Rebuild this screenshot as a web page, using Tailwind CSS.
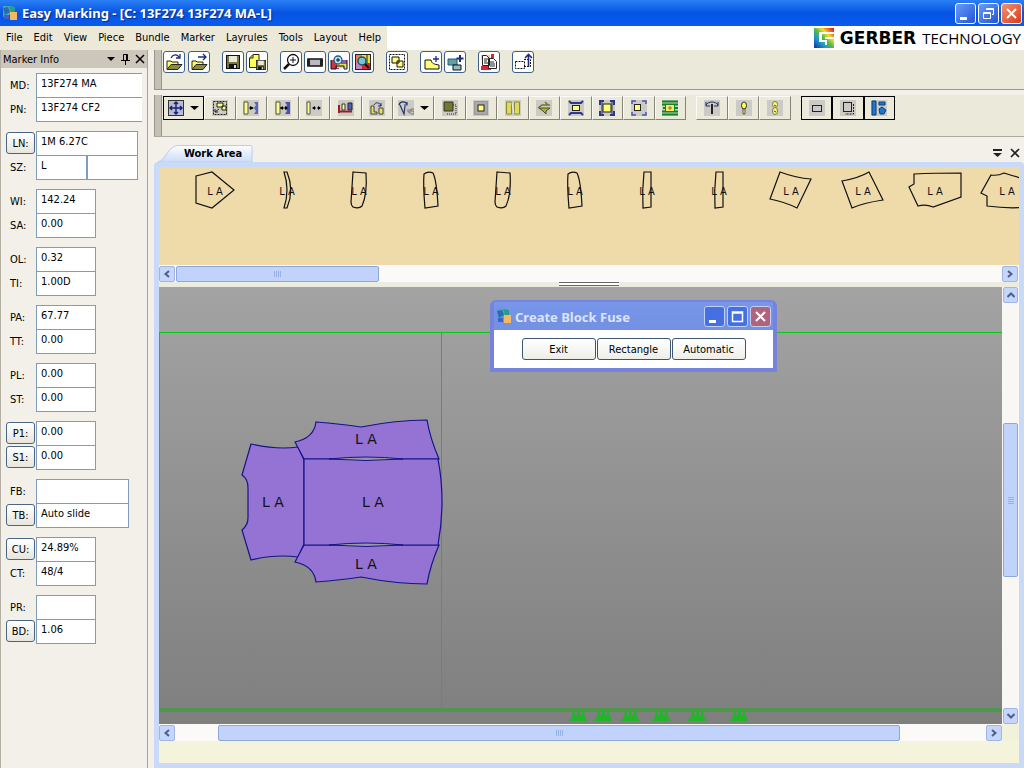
<!DOCTYPE html>
<html lang="en">
<head>
<meta charset="utf-8">
<meta name="viewport" content="width=device-width, initial-scale=1">
<title>Easy Marking</title>
<script src="https://cdn.jsdelivr.net/npm/@tailwindcss/browser@4"></script>
</head>
<body class="flex h-screen flex-col overflow-hidden bg-[#f2f0e8] font-['DejaVu_Sans_Condensed','DejaVu_Sans',sans-serif] text-[11px] leading-4 text-black">

<!-- shared symbols -->
<svg class="hidden" aria-hidden="true">
  <defs>
    <symbol id="app" viewBox="0 0 16 16"><path d="M1 1h9l3 4v5H6L1 12z" fill="#43a9c4"/><path d="M1 3l5-1 2 5-5 3z" fill="#2a6da8"/><path d="M7 1l6 1v6l-4-1z" fill="#2b9a86"/><rect x="8" y="7" width="7" height="8" fill="#f3b861"/><path d="M2 10h5v4H2z" fill="#3f62c4"/></symbol>
    <symbol id="left" viewBox="0 0 8 8"><path d="M6 1 2.500 4 6 7" fill="none" stroke="#4d6185" stroke-width="2"/></symbol>
    <symbol id="right" viewBox="0 0 8 8"><path d="M2 1 5.500 4 2 7" fill="none" stroke="#4d6185" stroke-width="2"/></symbol>
    <symbol id="up" viewBox="0 0 8 8"><path d="M0.500 6 4 2.500 7.500 6" fill="none" stroke="#4d6185" stroke-width="2"/></symbol>
    <symbol id="down" viewBox="0 0 8 8"><path d="M0.500 2 4 5.500 7.500 2" fill="none" stroke="#4d6185" stroke-width="2"/></symbol>
    <symbol id="folder" viewBox="0 0 18 18"><path d="M2 15V7h4l1 1h6v3" fill="#ffff5a" stroke="#222" /><path d="M2 15.500l4-5h11l-4 5z" fill="#8b8b3a" stroke="#222"/></symbol>
    <symbol id="disk" viewBox="0 0 14 14"><rect x=".5" y=".5" width="13" height="13" fill="#77773a" stroke="#111"/><rect x="3" y="1" width="8" height="6" fill="#e8e8e0"/><rect x="3" y="9" width="8" height="5" fill="#111"/><rect x="8" y="10" width="2" height="3" fill="#ddd"/></symbol>
  </defs>
</svg>

<header class="flex h-[26px] shrink-0 items-center bg-linear-to-b from-[#2a7ff5] via-[#0654e2] to-[#0a5bf0] pl-[2px] pr-[2px]">
  <svg class="h-4 w-4"><use href="#app"/></svg>
  <h1 class="ml-1 flex-1 whitespace-nowrap font-['Noto_Sans',sans-serif] text-[13px] font-bold text-white [text-shadow:1px_1px_1px_#0a2a80]">Easy Marking - [C: 13F274 13F274 MA-L]</h1>
  <div class="flex gap-[2px]">
    <button aria-label="Minimize" class="h-[21px] w-[21px] rounded-[3px] border border-white bg-linear-to-br from-[#6b9bf5] to-[#2353d8]"><svg class="h-[19px] w-[19px]"><path d="M4 13h7v3H4z" fill="#fff"/></svg></button>
    <button aria-label="Restore" class="h-[21px] w-[21px] rounded-[3px] border border-white bg-linear-to-br from-[#6b9bf5] to-[#2353d8]"><svg class="h-[19px] w-[19px]" fill="none" stroke="#fff"><path d="M4.500 8.500h7v6h-7zM4.500 9.500h7M7.500 6V4.500h7v6H13M7.500 5.500h7"/></svg></button>
    <button aria-label="Close" class="h-[21px] w-[21px] rounded-[3px] border border-white bg-linear-to-br from-[#f09070] to-[#d43a14]"><svg class="h-[19px] w-[19px]"><path d="M5 5l9 9M14 5l-9 9" stroke="#fff" stroke-width="2"/></svg></button>
  </div>
</header>

<div class="flex h-6 shrink-0 bg-white">
  <nav class="flex items-center gap-[11px] bg-[#ece9d8] pl-[6px] pr-[6px]">
    <a href="#">File</a><a href="#">Edit</a><a href="#">View</a><a href="#">Piece</a><a href="#">Bundle</a><a href="#">Marker</a><a href="#">Layrules</a><a href="#">Tools</a><a href="#">Layout</a><a href="#">Help</a>
  </nav>
  <div class="ml-auto flex items-center whitespace-nowrap font-['Open_Sans',sans-serif]">
    <svg class="mr-[6px] h-5 w-5" viewBox="0 0 20 20">
      <defs><linearGradient id="rb" x1="0" y1="1" x2="1" y2="0"><stop offset="0" stop-color="#1b2a9c"/><stop offset=".3" stop-color="#1f9ac8"/><stop offset=".5" stop-color="#58b947"/><stop offset=".68" stop-color="#f5df2a"/><stop offset=".85" stop-color="#ee5a24"/><stop offset="1" stop-color="#c31722"/></linearGradient></defs>
      <path d="M0 0h20v20H0z" fill="url(#rb)"/><path d="M5 4h15v2H8v6h5v5h-2v-3H5z" fill="#fff"/><path d="M11 9h9v2h-9z" fill="#fff"/>
    </svg>
    <span class="font-['DejaVu_Sans',sans-serif] text-[17px] font-bold">GERBER</span>
    <span class="ml-[6px] mr-[3px] text-[15px]">TECHNOLOGY</span>
  </div>
</div>

<div class="flex min-h-0 flex-1">
  <!-- marker info -->
  <aside class="flex w-[148px] shrink-0 flex-col border-l border-r border-l-[#b4b0a4] border-r-[#a8a498] bg-[#f2f0e9]">
    <div class="flex h-[18px] shrink-0 items-center bg-[#cdc7bb] pl-[2px] pr-[2px]">
      <h2 class="flex-1 pt-[2px]">Marker Info</h2>
      <button aria-label="Panel menu" class="mr-[6px]"><svg class="h-2 w-2"><path d="M0 2h8L4 6z"/></svg></button>
      <button aria-label="Pin" class="mr-[5px]"><svg class="h-[11px] w-[9px]" fill="none" stroke="#000"><path d="M2.500 6V.5h4V6M5.500 1v5M0 6.500h9M4.500 7v4"/></svg></button>
      <button aria-label="Close panel"><svg class="h-[10px] w-[10px]"><path d="M1 1l8 8M9 1l-8 8" stroke="#000" stroke-width="1.500"/></svg></button>
    </div>
    <form class="mt-[5px] flex flex-col gap-[10px]">
      <div class="flex flex-col">
        <div class="flex h-6 items-center"><label for="md" class="w-[35px] pl-[9px] pt-[2px]">MD:</label><input id="md" value="13F274 MA" class="h-[25px] w-[106px] border border-r-0 border-[#7f9db9] bg-white px-1 pb-[3px]"></div>
        <div class="flex h-6 items-center"><label for="pn" class="w-[35px] pl-[9px] pt-[2px]">PN:</label><input id="pn" value="13F274 CF2" class="h-[25px] w-[106px] border border-r-0 border-[#7f9db9] bg-white px-1 pb-[3px]"></div>
      </div>
      <div class="flex flex-col">
        <div class="flex h-6 items-center"><button type="button" class="ml-[5px] mr-[1px] h-[22px] w-[29px] rounded-[3px] border border-[#4a6684] bg-linear-to-b from-white to-[#e6e6de] pt-[1px]">LN:</button><input aria-label="LN" value="1M 6.27C" class="h-[25px] w-[102px] border border-[#7f9db9] bg-white px-1 pb-[3px]"></div>
        <div class="flex h-6 items-center"><label for="sz" class="w-[35px] pl-[9px] pt-[2px]">SZ:</label><input id="sz" value="L" class="h-[25px] w-[51px] border border-[#7f9db9] bg-white px-1 pb-[3px]"><input aria-label="SZ second" value="" class="h-[25px] w-[51px] border border-[#7f9db9] bg-white px-1"></div>
      </div>
      <div class="flex flex-col">
        <div class="flex h-6 items-center"><label for="wi" class="w-[35px] pl-[9px] pt-[2px]">WI:</label><input id="wi" value="142.24" class="h-[25px] w-[60px] border border-[#7f9db9] bg-white px-1 pb-[3px]"></div>
        <div class="flex h-6 items-center"><label for="sa" class="w-[35px] pl-[9px] pt-[2px]">SA:</label><input id="sa" value="0.00" class="h-[25px] w-[60px] border border-[#7f9db9] bg-white px-1 pb-[3px]"></div>
      </div>
      <div class="flex flex-col">
        <div class="flex h-6 items-center"><label for="ol" class="w-[35px] pl-[9px] pt-[2px]">OL:</label><input id="ol" value="0.32" class="h-[25px] w-[60px] border border-[#7f9db9] bg-white px-1 pb-[3px]"></div>
        <div class="flex h-6 items-center"><label for="ti" class="w-[35px] pl-[9px] pt-[2px]">TI:</label><input id="ti" value="1.00D" class="h-[25px] w-[60px] border border-[#7f9db9] bg-white px-1 pb-[3px]"></div>
      </div>
      <div class="flex flex-col">
        <div class="flex h-6 items-center"><label for="pa" class="w-[35px] pl-[9px] pt-[2px]">PA:</label><input id="pa" value="67.77" class="h-[25px] w-[60px] border border-[#7f9db9] bg-white px-1 pb-[3px]"></div>
        <div class="flex h-6 items-center"><label for="tt" class="w-[35px] pl-[9px] pt-[2px]">TT:</label><input id="tt" value="0.00" class="h-[25px] w-[60px] border border-[#7f9db9] bg-white px-1 pb-[3px]"></div>
      </div>
      <div class="flex flex-col">
        <div class="flex h-6 items-center"><label for="pl" class="w-[35px] pl-[9px] pt-[2px]">PL:</label><input id="pl" value="0.00" class="h-[25px] w-[60px] border border-[#7f9db9] bg-white px-1 pb-[3px]"></div>
        <div class="flex h-6 items-center"><label for="st" class="w-[35px] pl-[9px] pt-[2px]">ST:</label><input id="st" value="0.00" class="h-[25px] w-[60px] border border-[#7f9db9] bg-white px-1 pb-[3px]"></div>
      </div>
      <div class="flex flex-col">
        <div class="flex h-6 items-center"><button type="button" class="ml-[5px] mr-[1px] h-[22px] w-[29px] rounded-[3px] border border-[#4a6684] bg-linear-to-b from-white to-[#e6e6de] pt-[1px]">P1:</button><input aria-label="P1" value="0.00" class="h-[25px] w-[60px] border border-[#7f9db9] bg-white px-1 pb-[3px]"></div>
        <div class="flex h-6 items-center"><button type="button" class="ml-[5px] mr-[1px] h-[22px] w-[29px] rounded-[3px] border border-[#4a6684] bg-linear-to-b from-white to-[#e6e6de] pt-[1px]">S1:</button><input aria-label="S1" value="0.00" class="h-[25px] w-[60px] border border-[#7f9db9] bg-white px-1 pb-[3px]"></div>
      </div>
      <div class="flex flex-col">
        <div class="flex h-6 items-center"><label for="fb" class="w-[35px] pl-[9px] pt-[2px]">FB:</label><input id="fb" value="" class="h-[25px] w-[93px] border border-[#7f9db9] bg-white px-1"></div>
        <div class="flex h-6 items-center"><button type="button" class="ml-[5px] mr-[1px] h-[22px] w-[29px] rounded-[3px] border border-[#4a6684] bg-linear-to-b from-white to-[#e6e6de] pt-[1px]">TB:</button><input aria-label="TB" value="Auto slide" class="h-[25px] w-[93px] border border-[#7f9db9] bg-white px-1 pb-[3px]"></div>
      </div>
      <div class="flex flex-col">
        <div class="flex h-6 items-center"><button type="button" class="ml-[5px] mr-[1px] h-[22px] w-[29px] rounded-[3px] border border-[#4a6684] bg-linear-to-b from-white to-[#e6e6de] pt-[1px]">CU:</button><input aria-label="CU" value="24.89%" class="h-[25px] w-[60px] border border-[#7f9db9] bg-white px-1 pb-[3px]"></div>
        <div class="flex h-6 items-center"><label for="ct" class="w-[35px] pl-[9px] pt-[2px]">CT:</label><input id="ct" value="48/4" class="h-[25px] w-[60px] border border-[#7f9db9] bg-white px-1 pb-[3px]"></div>
      </div>
      <div class="flex flex-col">
        <div class="flex h-6 items-center"><label for="pr" class="w-[35px] pl-[9px] pt-[2px]">PR:</label><input id="pr" value="" class="h-[25px] w-[60px] border border-[#7f9db9] bg-white px-1"></div>
        <div class="flex h-6 items-center"><button type="button" class="ml-[5px] mr-[1px] h-[22px] w-[29px] rounded-[3px] border border-[#4a6684] bg-linear-to-b from-white to-[#e6e6de] pt-[1px]">BD:</button><input aria-label="BD" value="1.06" class="h-[25px] w-[60px] border border-[#7f9db9] bg-white px-1 pb-[3px]"></div>
      </div>
    </form>
  </aside>

  <div class="ml-[6px] flex min-w-0 flex-1 flex-col">
    <!-- file and zoom toolbar -->
    <div class="flex h-10 shrink-0 border-b border-[#98958a] bg-[#ebe9d9]">
      <div class="mr-[1px] w-2 border-l border-r border-[#99958a] bg-[#c4c0b6]"></div>
      <div class="flex gap-3 pt-[1px] [&_button]:h-[22px] [&_button]:w-[22px] [&_button]:rounded-[3px] [&_button]:border [&_button]:border-[#3e6088] [&_button]:bg-white [&_svg.i]:h-5 [&_svg.i]:w-5">
        <div class="flex gap-[3px]">
          <button aria-label="Open"><svg class="i" viewBox="0 0 20 20"><use href="#folder" x="1" y="2" width="18" height="18"/><path d="M7 6c2-4 6-4 8-1M16 2v4h-4" fill="none" stroke="#1b2a78" stroke-width="1.300"/></svg></button>
          <button aria-label="Open next"><svg class="i" viewBox="0 0 20 20"><use href="#folder" x="1" y="2" width="18" height="18"/><path d="M9 5h8M14 2l3 3-3 3" fill="none" stroke="#1b2a78" stroke-width="1.300"/></svg></button>
        </div>
        <div class="flex gap-[2px]">
          <button aria-label="Save"><svg class="i" viewBox="0 0 20 20"><use href="#disk" x="3" y="3" width="14" height="14"/></svg></button>
          <button aria-label="Save as"><svg class="i" viewBox="0 0 20 20"><path d="M6 2.500h6v13H2.500V6z" fill="#ffff5a" stroke="#222"/><path d="M6 3v3H3" fill="none" stroke="#222"/><use href="#disk" x="9" y="8" width="10" height="10"/></svg></button>
        </div>
        <div class="flex gap-[2px]">
          <button aria-label="Zoom in"><svg class="i" viewBox="0 0 20 20" fill="none" stroke="#111"><circle cx="12" cy="8" r="5.500" stroke-width="1.300"/><path d="M9 8h6M12 5v6"/><path d="M8 12l-5 5" stroke-width="2.500"/></svg></button>
          <button aria-label="Full length"><svg class="i" viewBox="0 0 20 20"><rect x="3" y="7" width="14" height="7" fill="#b9b9c2" stroke="#111" stroke-width="1.500"/><path d="M2 7h3v7H2zM15 7h3v7h-3z" fill="#222"/></svg></button>
          <button aria-label="Zoom marker"><svg class="i" viewBox="0 0 20 20"><path d="M2 8h5l3 5v4H2z" fill="#d23344"/><path d="M12 8h6v5h-6z" fill="#9b55a5"/><path d="M8 12h10v4H8z" fill="#e8df55"/><path d="M2 8v9h5v-3h8v3h3V8" fill="none" stroke="#111"/><circle cx="9" cy="8" r="4" fill="#b8e6f2" stroke="#19608c" stroke-width="1.300"/><path d="M9 6v4M7 8h4" stroke="#111"/></svg></button>
          <button aria-label="Zoom window"><svg class="i" viewBox="0 0 20 20"><path d="M2 2h7v7H2z" fill="#ef7d58"/><path d="M9 2h9v9H9z" fill="#f5dd36"/><path d="M2 9h7v9H2z" fill="#c783bd"/><path d="M9 11h9v7H9z" fill="#dd2331"/><path d="M2 2.500h16M2.500 2v16M17.500 2v16M2 17.500h16M14 2v9" stroke="#222" fill="none"/><circle cx="9" cy="9" r="4" fill="#74c7d2" stroke="#185469" stroke-width="1.500"/><path d="M12 12l4 4" stroke="#111" stroke-width="2"/></svg></button>
        </div>
        <button aria-label="Select pieces"><svg class="i" viewBox="0 0 20 20"><rect x="2.500" y="2.500" width="15" height="15" fill="none" stroke="#111" stroke-dasharray="2 1"/><path d="M5 5h7v6H5zM10 9h6v6h-6z" fill="#ffff77" stroke="#111"/></svg></button>
        <div class="flex gap-[2px]">
          <button aria-label="Add piece"><svg class="i" viewBox="0 0 20 20"><path d="M4 8h6c1 4 3 4 8 5v4H4z" fill="#ffff77" stroke="#111"/><path d="M15 4v6M12 7h6" stroke="#1b2a88" stroke-width="1.300"/></svg></button>
          <button aria-label="Add bundle"><svg class="i" viewBox="0 0 20 20"><path d="M3 7h9v6H3z" fill="#5fa0a5" stroke="#245a68"/><path d="M8 13h8v5H8z" fill="#8fc0c0" stroke="#111"/><path d="M15 3v7M11.500 6.500h7" stroke="#1b2a88" stroke-width="2"/></svg></button>
        </div>
        <button aria-label="Copy report"><svg class="i" viewBox="0 0 20 20"><path d="M2 3h9v5H2z" fill="#f2e25a"/><path d="M2 14h10v4H2z" fill="#dd2331"/><path d="M3.500 3.500h4l3 3v7h-7zM9.500 6.500h5l3 3v7h-8z" fill="#fff" stroke="#222"/><path d="M5 7h4M5 9h3M5 11h4M11 10h4M11 12h5M11 14h5" stroke="#222"/><path d="M12 2h3v4h-3z" fill="#dd2331"/></svg></button>
        <button aria-label="Return piece"><svg class="i" viewBox="0 0 20 20" fill="none" stroke="#111"><rect x="2.500" y="9.500" width="9" height="7" stroke-dasharray="2 1"/><path d="M11 7.500h6.500v7H11" stroke-dasharray="2 1"/><path d="M15.500 15V3M12 6l3.500-3.500L19 6" stroke="#1b2a88" stroke-width="1.600"/></svg></button>
      </div>
    </div>

    <!-- piece toolbar -->
    <div class="mt-[5px] flex h-[42px] shrink-0 border-b border-[#aaa79b] bg-[#ebe9d9] text-[0px]">
      <div class="mr-[1px] w-2 border-l border-r border-[#99958a] bg-[#c4c0b6]"></div>
      <div class="flex h-6 gap-[10px] pt-[1px] [&_button]:flex [&_button]:h-6 [&_button]:items-center [&_button]:justify-center [&_svg.i]:h-4 [&_svg.i]:w-4 [&_svg.i]:bg-[#cbcac4]">
        <div class="flex w-[523px] [&_button]:flex-1 [&_button.n]:border [&_button.n]:border-l-[#fbfaf5] [&_button.n]:border-t-[#fbfaf5] [&_button.n]:border-r-[#85827a] [&_button.n]:border-b-[#85827a]">
          <button aria-label="Move" class="max-w-[41px] min-w-[41px] gap-[6px] border border-black"><svg class="i" viewBox="0 0 16 16"><rect x=".5" y=".5" width="15" height="15" fill="#b9bbd8" stroke="#333"/><path d="M8 2v12M2 8h12M6 4l2-2 2 2M6 12l2 2 2-2M4 6L2 8l2 2M12 6l2 2-2 2" fill="none" stroke="#15206e" stroke-width="1.400"/></svg><svg class="h-2 w-[9px]"><path d="M0 2h9L4.500 6z"/></svg></button>
          <button aria-label="Group" class="n"><svg class="i" viewBox="0 0 16 16"><rect x="1.500" y="1.500" width="13" height="13" fill="none" stroke="#222" stroke-dasharray="2 1"/><path d="M5 3h6v4H5zM10 6h4v4h-4z" fill="#ffff77" stroke="#222"/><path d="M3 12l4-3M3 12h3M3 12V9" fill="none" stroke="#222"/></svg></button>
          <button aria-label="Butt left" class="n"><svg class="i" viewBox="0 0 16 16"><path d="M1 2h4v12H1z" fill="#ffff88" stroke="#555"/><path d="M11 2h4v12h-4l2-3-2-3 2-3z" fill="#5a67b8"/><path d="M6 8h4" stroke="#111"/><path d="M7 6v4l4-2z"/></svg></button>
          <button aria-label="Butt right" class="n"><svg class="i" viewBox="0 0 16 16"><path d="M1 2h4v12H1z" fill="#ffff88" stroke="#555"/><path d="M10 2h5v12h-5l2-3-2-3 2-3z" fill="#4853ae"/><path d="M5 8h7" stroke="#111"/><path d="M8 6v4L5 8zM10 6v4l3-2z"/></svg></button>
          <button aria-label="Gap" class="n"><svg class="i" viewBox="0 0 16 16"><path d="M1 2h3v12H1z" fill="#ffff88" stroke="#555"/><path d="M7 8h8" stroke="#111" stroke-dasharray="3 1"/><path d="M9 6v4L6 8zM12 6v4l3-2z"/></svg></button>
          <button aria-label="Align" class="n"><svg class="i" viewBox="0 0 16 16"><path d="M4 4h3v6H4z" fill="#ffff88" stroke="#333"/><path d="M10 3h4v7h-4z" fill="#5361b6" stroke="#222"/><path d="M1 5v8M1 11.500h13" fill="none" stroke="#9a1c28" stroke-width="2"/></svg></button>
          <button aria-label="Rotate" class="n"><svg class="i" viewBox="0 0 16 16"><path d="M2 6h3v6h3v2H2zM10 8h4v6h-4z" fill="#e8e45c" stroke="#444"/><path d="M5 5c1-3 6-3 7 1M12 3v3H9" fill="none" stroke="#222a66"/></svg></button>
          <button aria-label="Tilt" class="n max-w-[41px] min-w-[41px] gap-[6px]"><svg class="i" viewBox="0 0 16 16"><path d="M1 5c1-4 6-4 8-1M9 2v3H6M2 5l4 9 1-8" fill="none" stroke="#28336e" stroke-width="1.200"/><path d="M10 9v3h2M12 9v5M13 9h3M13 9v2h3v3h-3" fill="none" stroke="#777"/></svg><svg class="h-2 w-[9px]"><path d="M0 2h9L4.500 6z"/></svg></button>
          <button aria-label="Block" class="n"><svg class="i" viewBox="0 0 16 16"><path d="M5 5h9v9H5" fill="none" stroke="#222" stroke-dasharray="1 1"/><path d="M2 2h9v9H2z" fill="#71792b" stroke="#333"/></svg></button>
          <button aria-label="Buffer" class="n"><svg class="i" viewBox="0 0 16 16"><rect x="1.500" y="1.500" width="13" height="13" fill="#aaa" stroke="#777" stroke-dasharray="1 1"/><rect x="5" y="5" width="6" height="6" fill="#ffff88" stroke="#222"/></svg></button>
          <button aria-label="Split" class="n"><svg class="i" viewBox="0 0 16 16"><path d="M1.500 2h5v12h-5zM9.500 2h5v12h-5z" fill="#dedb5a" stroke="#8b893c"/><path d="M7 3l2 10" stroke="#eee"/></svg></button>
          <button aria-label="Flip" class="n"><svg class="i" viewBox="0 0 16 16"><path d="M3 8h11l-4 3v3l-3-3z" fill="#a9b630" stroke="#4a501c"/><path d="M2 8l4-3h8M9 2l3 3" fill="none" stroke="#6f7926" stroke-width="1.500"/></svg></button>
          <button aria-label="Center vertically" class="n"><svg class="i" viewBox="0 0 16 16"><path d="M1 1l2 2h10l2-2M1 15l2-2h10l2 2" fill="none" stroke="#2c3791" stroke-width="2"/><rect x="4.500" y="5.500" width="7" height="5" fill="#ffff88" stroke="#222"/></svg></button>
          <button aria-label="Fit" class="n"><svg class="i" viewBox="0 0 16 16"><path d="M1 5V1h4M11 1h4v4M1 11v4h4M15 11v4h-4" fill="none" stroke="#2c3791" stroke-width="2"/><rect x="4" y="4" width="8" height="8" fill="#ffff77" stroke="#222"/><path d="M3 2v12M13 2v12" stroke="#333"/></svg></button>
          <button aria-label="Expand" class="n"><svg class="i" viewBox="0 0 16 16"><path d="M1 4V1h4M11 1h4v3M1 12v3h4M15 12v3h-4" fill="none" stroke="#4a56b0" stroke-width="1.500"/><rect x="3.500" y="4.500" width="6" height="6" fill="#ffff77" stroke="#222"/></svg></button>
          <button aria-label="Stripe match" class="n"><svg class="i" viewBox="0 0 16 16"><path d="M0 1.500h16M0 4.500h16M0 11.500h16M0 14.500h16M1 8h15" stroke="#128428" stroke-width="1.800"/><rect x="3.500" y="4.500" width="9" height="7" fill="#f1ee66" stroke="#128428"/><path d="M8 6v4M6 8h4" stroke="#c3551c"/></svg></button>
        </div>
        <div class="flex w-[95px] [&_button]:flex-1 [&_button]:border [&_button]:border-l-[#fbfaf5] [&_button]:border-t-[#fbfaf5] [&_button]:border-r-[#85827a] [&_button]:border-b-[#85827a]">
          <button aria-label="Swing"><svg class="i" viewBox="0 0 16 16" fill="none"><path d="M8 14V4" stroke="#222" stroke-width="2"/><path d="M2 5c2-4 10-4 12 0M2 2v4h4M14 2v4h-4" stroke="#222a66"/></svg></button>
          <button aria-label="Notch one"><svg class="i" viewBox="0 0 16 16"><ellipse cx="8" cy="5.500" rx="2.500" ry="3.500" fill="#ffff55" stroke="#333"/><path d="M7 9h2v5H7z" fill="#ffff55" stroke="#555"/></svg></button>
          <button aria-label="Notch two"><svg class="i" viewBox="0 0 16 16"><ellipse cx="8" cy="4.500" rx="2.500" ry="3" fill="#ffff55" stroke="#777"/><ellipse cx="8" cy="11" rx="2.500" ry="3.500" fill="#ffff55" stroke="#777"/><path d="M7 5l2 1M7 11l2 1" stroke="#444"/></svg></button>
        </div>
        <div class="flex w-[94px] [&_button]:flex-1 [&_button]:border [&_button]:border-black">
          <button aria-label="Show outline"><svg class="i" viewBox="0 0 16 16"><rect x="3.500" y="5.500" width="9" height="6" fill="none" stroke="#222"/></svg></button>
          <button aria-label="Show shadow"><svg class="i" viewBox="0 0 16 16" fill="none" stroke="#222"><rect x="3.500" y="2.500" width="8" height="9"/><path d="M13.500 4v10H5" stroke-dasharray="2 1"/></svg></button>
          <button aria-label="Show pieces"><svg class="i" viewBox="0 0 16 16"><path d="M1 1h4v14H1zM8 2h6v3H8zM8 9l3-2 4 3-2 4H9z" fill="#1d78cc" stroke="#0d3e7c"/></svg></button>
        </div>
      </div>
    </div>

    <!-- work area -->
    <div class="flex h-[25px] shrink-0 items-end pl-1">
      <div class="relative flex h-[17px] w-[95px] items-center">
        <svg class="absolute inset-0 h-full w-full" viewBox="0 0 95 17"><defs><linearGradient id="tb" x1="0" y1="0" x2="0" y2="1"><stop offset="0" stop-color="#fdfdff"/><stop offset="1" stop-color="#cbdcf8"/></linearGradient></defs><path d="M0 17C8 15 10 1 20 .5H92q2 0 2 2V17z" fill="url(#tb)" stroke="#b9cdee"/></svg>
        <span class="relative ml-[26px] whitespace-nowrap pt-[1px] font-bold">Work Area</span>
      </div>
      <div class="ml-auto mr-1 flex items-center gap-2 pb-1">
        <button aria-label="Tab list"><svg class="h-[10px] w-[9px]"><path d="M0 1h9v2H0zM0 5h9L4.500 9z" fill="#222"/></svg></button>
        <button aria-label="Close tab"><svg class="h-[10px] w-[10px]"><path d="M1 1l8 8M9 1l-8 8" stroke="#222" stroke-width="1.700"/></svg></button>
      </div>
    </div>
    <main class="flex min-h-0 flex-1 flex-col rounded-t-[4px] border-[5px] border-[#c8daf7] bg-[#f1f2dc]">
      <svg class="h-[98px] w-full shrink-0 bg-[#efdaa9]" fill="none" stroke="#111" stroke-width="1.200">
        <path d="M37 9l16-4 22 18-22 18-16-5z"/>
        <path d="M125 5h3c5 12 5 24 0 36h-3c4-12 4-24 0-36z"/>
        <path d="M194 5l13 1c1 14 0 24-4 33q-3 3-9 1q-2-2-2-5z"/>
        <path d="M265 7q4-3 9-1c3 6 4 14 5 33l-13 2c-1-12-2-22-1-34z"/>
        <path d="M338 5l13 1c1 14 0 24-4 33q-3 3-9 1q-2-2-2-5z"/>
        <path d="M409 7q4-3 9-1c3 6 4 14 5 33l-13 2c-1-12-2-22-1-34z"/>
        <path d="M485 5h7v35l-8 1q-1-18 1-36z"/>
        <path d="M557 5h7v35l-8 1q-1-18 1-36z"/>
        <path d="M621 5q16 6 31 7l-14 29q-12-6-27-9z"/>
        <path d="M683 14q17-3 27-9l14 28q-20 3-31 8z"/>
        <path d="M755 7q20-1 47-1v24l-28 10q-7-3-15-1l-9-19 5-3z"/>
        <path d="M832 8q7 1 13-2 12 4 25 7v27q-20 2-42-1V29l-6-3z"/>
        <g fill="#111" stroke="none" font-size="11" text-anchor="middle">
          <text x="56" y="28">L A</text><text x="128" y="28">L A</text><text x="200" y="28">L A</text><text x="272" y="28">L A</text><text x="344" y="28">L A</text><text x="416" y="28">L A</text><text x="488" y="28">L A</text><text x="560" y="28">L A</text><text x="632" y="28">L A</text><text x="704" y="28">L A</text><text x="776" y="28">L A</text><text x="848" y="28">L A</text>
        </g>
      </svg>
      <div class="flex h-[17px] shrink-0 bg-[#fbfaf8] pr-[1px] pt-[1px]">
        <button aria-label="Scroll left" class="flex h-4 w-4 items-center justify-center rounded-[2px] border border-[#9eb6e6] bg-[#c5d5fb]"><svg class="h-2 w-2"><use href="#left"/></svg></button>
        <div class="ml-[1px] flex h-4 w-[203px] items-center justify-center gap-[1px] rounded-[2px] border border-[#8ea8de] bg-[#c2d3fb]"><i class="h-[6px] w-[1px] bg-[#98b1e4]"></i><i class="h-[6px] w-[1px] bg-[#98b1e4]"></i><i class="h-[6px] w-[1px] bg-[#98b1e4]"></i><i class="h-[6px] w-[1px] bg-[#98b1e4]"></i></div>
        <button aria-label="Scroll right" class="ml-auto flex h-4 w-4 items-center justify-center rounded-[2px] border border-[#9eb6e6] bg-[#c5d5fb]"><svg class="h-2 w-2"><use href="#right"/></svg></button>
      </div>
      <div class="flex h-[5px] shrink-0 justify-center bg-[#ecebdf]"><div class="h-1 w-[60px] border-y border-[#666] bg-white"></div></div>
      <div class="flex min-h-0 flex-1">
        <div class="relative min-w-0 flex-1 overflow-hidden bg-linear-to-b from-[#a3a3a3] to-[#7f7f7f]">
          <svg class="h-full w-full">
            <g fill="#0ac81a"><rect y="45" width="100%" height="1"/><rect y="45" width="1" height="378"/><rect x="282" y="45" width="1" height="378"/><rect y="421" width="100%" height="4" fill="#4d984b"/><rect y="422" width="100%" height="1" fill="#34a836"/></g>
            <g fill="#9473d4" stroke="#14148a" stroke-width="1.200">
              <path d="M92 157q26 6 47 3l6 13v84l-6 13q-22-3-47 3l-9-30q6-5 6-12v-30q0-9-6-13z"/>
              <path d="M157 135q25 2 45 5 35-7 66-7 3 18 12 39H145l-9-17q19-4 21-20z"/>
              <path d="M157 295q25-2 45-5 35 7 66 7 3-18 12-39H145l-9 17q19 4 21 20z"/>
              <path d="M145 172h134q8 42 0 86H145z"/>
            </g>
            <path d="M170 172q37-4 74 0-37 3-74 0zM170 258q37-4 74 0-37 3-74 0z" fill="#9a96a8" stroke="#14148a"/>
            <g class="font-['DejaVu_Sans',sans-serif]" fill="#111" font-size="14" text-anchor="middle"><text x="207" y="157">L A</text><text x="114" y="220">L A</text><text x="214" y="220">L A</text><text x="207" y="282">L A</text></g>
            <!-- small bundle markers beneath the fabric edge -->
            <g fill="#22b52a">
              <path id="m" d="M410 434v-2h2l2-7h2v3h2v-5h3v5h2v-3h2l2 7h1v2z"/>
              <use href="#m" x="25"/><use href="#m" x="52"/><use href="#m" x="83"/><use href="#m" x="119"/><use href="#m" x="161"/>
            </g>
          </svg>
          <section class="absolute left-[331px] top-[13px] flex w-[287px] flex-col rounded-t-[6px] border-4 border-t-2 border-[#7583dc] bg-white" aria-label="Create Block Fuse">
            <div class="flex h-7 items-center bg-linear-to-b from-[#7896ea] to-[#7390e2] px-[2px]">
              <svg class="h-4 w-4"><use href="#app"/></svg>
              <h2 class="ml-[3px] flex-1 pt-[2px] font-['Noto_Sans',sans-serif] text-[13px] font-bold text-[#dbe4fb]">Create Block Fuse</h2>
              <div class="flex gap-[2px]">
                <button aria-label="Minimize dialog" class="h-[21px] w-[21px] rounded-[3px] border border-[#c3cff5] bg-[#4570e2]"><svg class="h-[19px] w-[19px]"><path d="M4 13h7v3H4z" fill="#fff"/></svg></button>
                <button aria-label="Maximize dialog" class="h-[21px] w-[21px] rounded-[3px] border border-[#c3cff5] bg-[#4570e2]"><svg class="h-[19px] w-[19px]"><path d="M4.500 5h10v9.500h-10zM4 6h11" fill="none" stroke="#fff" stroke-width="1.500"/></svg></button>
                <button aria-label="Close dialog" class="h-[21px] w-[21px] rounded-[3px] border border-[#c3cff5] bg-[#b0647c]"><svg class="h-[19px] w-[19px]"><path d="M5 5l9 9M14 5l-9 9" stroke="#fff" stroke-width="2"/></svg></button>
              </div>
            </div>
            <div class="flex justify-center gap-[1px] pb-2 pt-2">
              <button class="h-[22px] w-[74px] rounded-[3px] border border-[#3c5672] bg-linear-to-b from-white to-[#eeeee8] pt-[1px]">Exit</button>
              <button class="h-[22px] w-[74px] rounded-[3px] border border-[#3c5672] bg-linear-to-b from-white to-[#eeeee8] pt-[1px]">Rectangle</button>
              <button class="h-[22px] w-[74px] rounded-[3px] border border-[#3c5672] bg-linear-to-b from-white to-[#eeeee8] pt-[1px]">Automatic</button>
            </div>
          </section>
        </div>
        <div class="flex w-[17px] flex-col items-center bg-[#f8f7f3]">
          <button aria-label="Scroll up" class="flex h-4 w-[15px] items-center justify-center rounded-[2px] border border-[#9eb6e6] bg-[#c5d5fb]"><svg class="h-2 w-2"><use href="#up"/></svg></button>
          <div class="flex-[120]"></div>
          <div class="flex h-[154px] w-[15px] flex-col items-center justify-center gap-[1px] rounded-[2px] border border-[#8ea8de] bg-[#c2d3fb]"><i class="h-[1px] w-[6px] bg-[#98b1e4]"></i><i class="h-[1px] w-[6px] bg-[#98b1e4]"></i><i class="h-[1px] w-[6px] bg-[#98b1e4]"></i><i class="h-[1px] w-[6px] bg-[#98b1e4]"></i></div>
          <div class="flex-[130]"></div>
          <button aria-label="Scroll down" class="flex h-4 w-[15px] items-center justify-center rounded-[2px] border border-[#9eb6e6] bg-[#c5d5fb]"><svg class="h-2 w-2"><use href="#down"/></svg></button>
        </div>
      </div>
      <div class="mr-[17px] flex h-[17px] shrink-0 bg-[#fbfaf8] pt-[1px]">
        <button aria-label="Scroll canvas left" class="flex h-4 w-4 items-center justify-center rounded-[2px] border border-[#9eb6e6] bg-[#c5d5fb]"><svg class="h-2 w-2"><use href="#left"/></svg></button>
        <div class="flex-[43]"></div>
        <div class="flex h-4 w-[682px] items-center justify-center gap-[1px] rounded-[2px] border border-[#8ea8de] bg-[#c2d3fb]"><i class="h-[6px] w-[1px] bg-[#98b1e4]"></i><i class="h-[6px] w-[1px] bg-[#98b1e4]"></i><i class="h-[6px] w-[1px] bg-[#98b1e4]"></i><i class="h-[6px] w-[1px] bg-[#98b1e4]"></i></div>
        <div class="flex-[86]"></div>
        <button aria-label="Scroll canvas right" class="flex h-4 w-4 items-center justify-center rounded-[2px] border border-[#9eb6e6] bg-[#c5d5fb]"><svg class="h-2 w-2"><use href="#right"/></svg></button>
      </div>
      <div class="h-[22px] shrink-0 bg-[#f4f4dc]"></div>
    </main>
  </div>
</div>
</body>
</html>
